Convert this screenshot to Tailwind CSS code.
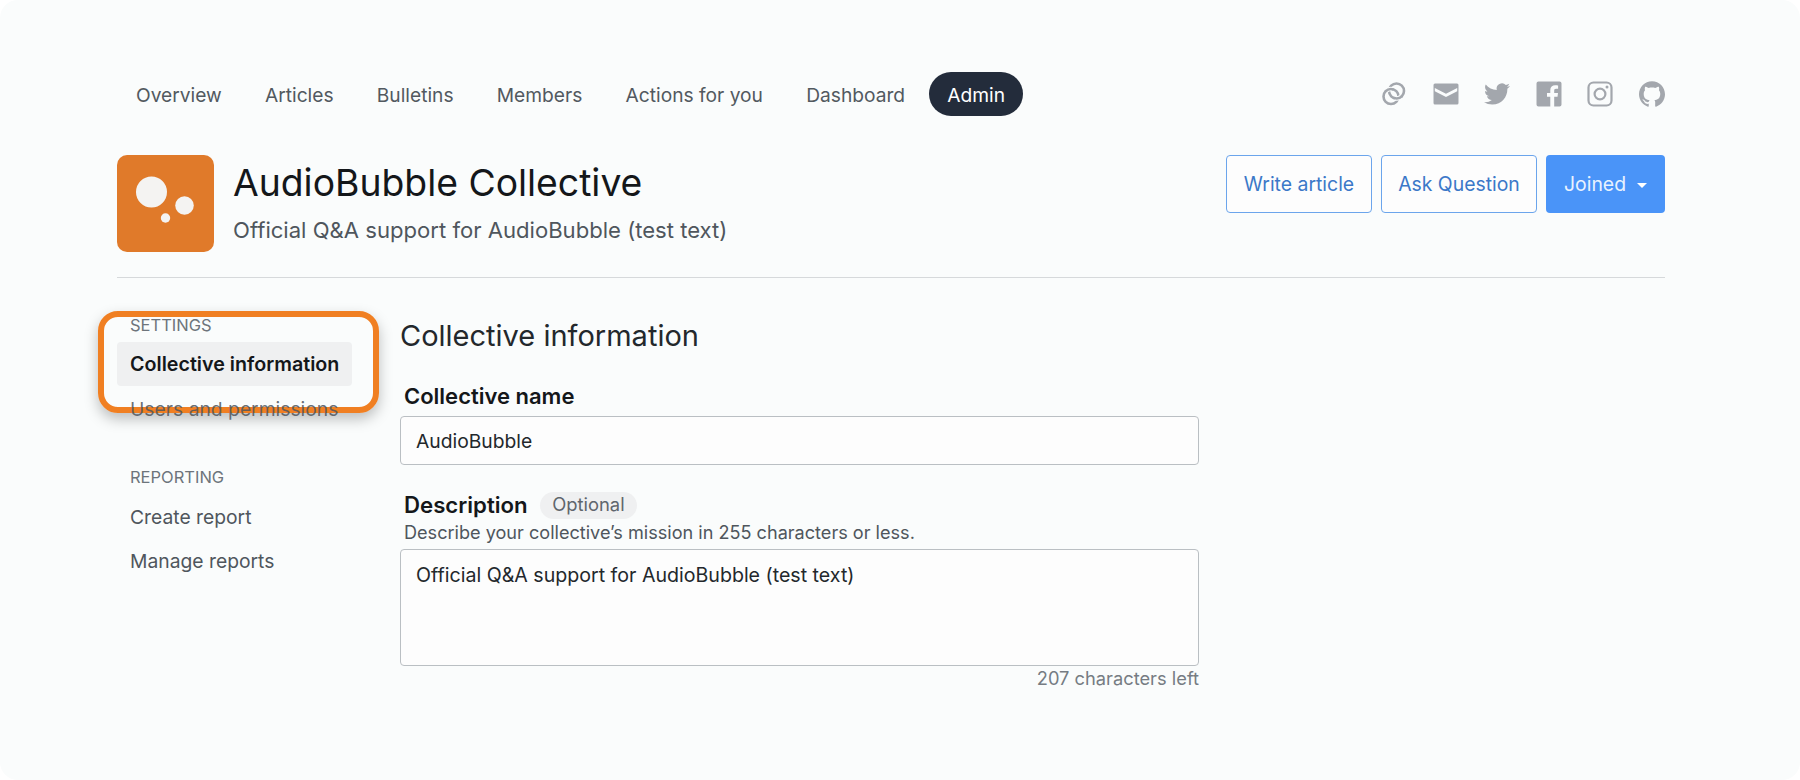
<!DOCTYPE html>
<html lang="en">

<head>
    <meta charset="UTF-8">
    <title>AudioBubble Collective</title>
    <script src="https://cdn.jsdelivr.net/npm/@tailwindcss/browser@4"></script>
</head>

<body class="bg-white font-['Inter',sans-serif]">
    <main class="relative h-[780px] w-[1800px] overflow-hidden rounded-[18px] bg-[#fafcfc] pl-[117px] pr-[135px] pt-[72px]">
        <!-- top nav -->
        <header class="flex h-[44px] items-center justify-between">
            <nav class="flex items-center gap-[5.200px] text-[19.200px] text-[#525960]">
                <a class="pt-[2px] px-[19px]">Overview</a>
                <a class="pt-[2px] px-[19px]">Articles</a>
                <a class="pt-[2px] px-[19px]">Bulletins</a>
                <a class="pt-[2px] px-[19px]">Members</a>
                <a class="pt-[2px] px-[19px]">Actions for you</a>
                <a class="pt-[2px] px-[19px]">Dashboard</a>
                <a class="flex h-[44px] items-center rounded-full bg-[#232c3b] px-[18px] pt-[2px] text-white">Admin</a>
            </nav>
            <div class="flex items-center gap-[25.6px] text-[#a3a7ad]">
                <svg class="h-[26px] w-[26px]" viewBox="0 0 26 26" fill="none" stroke="currentColor" stroke-width="2.6">
                    <circle cx="10" cy="15.500" r="7.500" />
                    <circle cx="15.500" cy="10" r="7.500" />
                    <path d="M5.310 9.650A7.500 7.500 0 0 1 11.470 8.150" stroke="#fafcfc" stroke-width="4.600" />
                    <path d="M4.500 10.400A7.500 7.500 0 0 1 12.500 8.500" />
                    <path d="M20.190 15.850A7.500 7.500 0 0 1 14.030 17.350" stroke="#fafcfc" stroke-width="4.600" />
                    <path d="M21 15.100A7.500 7.500 0 0 1 13 16.900" />
                </svg>
                <svg class="h-[26px] w-[26px]" viewBox="0 0 26 26" fill="currentColor">
                    <path fill-rule="evenodd" d="M2 2.500h22a1.500 1.500 0 0 1 1.500 1.500v18a1.500 1.500 0 0 1-1.500 1.500H2A1.500 1.500 0 0 1 .5 22V4A1.500 1.500 0 0 1 2 2.500Zm-.2 4.600v3.200L13 16l11.200-5.700V7.100L13 12.800Z" />
                </svg>
                <svg class="h-[26px] w-[26px]" viewBox="0 0 24 24" fill="currentColor">
                    <path d="M23.953 4.57a10 10 0 01-2.825.775 4.958 4.958 0 002.163-2.723c-.951.555-2.005.959-3.127 1.184a4.92 4.92 0 00-8.384 4.482C7.69 8.095 4.067 6.13 1.64 3.162a4.822 4.822 0 00-.666 2.475c0 1.71.87 3.213 2.188 4.096a4.904 4.904 0 01-2.228-.616v.06a4.923 4.923 0 003.946 4.827 4.996 4.996 0 01-2.212.085 4.936 4.936 0 004.604 3.417 9.867 9.867 0 01-6.102 2.105c-.39 0-.779-.023-1.17-.067a13.995 13.995 0 007.557 2.209c9.053 0 13.998-7.496 13.998-13.985 0-.21 0-.42-.015-.63A9.935 9.935 0 0024 4.59z" />
                </svg>
                <svg class="h-[26px] w-[26px]" viewBox="0 0 26 26" fill="currentColor">
                    <path d="M2.500 .5h21a2 2 0 0 1 2 2v21a2 2 0 0 1-2 2h-5.300v-9.700h3.300l.5-3.800h-3.800v-2.400c0-1.100.3-1.800 1.900-1.800h2V4.400c-.4 0-1.600-.2-2.900-.2-2.900 0-4.900 1.800-4.900 5v2.800h-3.300v3.800h3.300v9.700H2.500a2 2 0 0 1-2-2v-21a2 2 0 0 1 2-2Z" />
                </svg>
                <svg class="h-[26px] w-[26px]" viewBox="0 0 26 26" fill="none" stroke="currentColor" stroke-width="2.200">
                    <rect x="1.500" y="1.500" width="23" height="23" rx="5" />
                    <circle cx="13" cy="13" r="5.400" />
                    <circle cx="20" cy="6" r="1.500" fill="currentColor" stroke="none" />
                </svg>
                <svg class="h-[26px] w-[26px]" viewBox="0 0 24 24" fill="currentColor">
                    <path d="M12 .297c-6.63 0-12 5.373-12 12 0 5.303 3.438 9.8 8.205 11.385.6.113.82-.258.82-.577 0-.285-.01-1.04-.015-2.04-3.338.724-4.042-1.61-4.042-1.61C4.422 18.07 3.633 17.7 3.633 17.7c-1.087-.744.084-.729.084-.729 1.205.084 1.838 1.236 1.838 1.236 1.07 1.835 2.809 1.305 3.495.998.108-.776.417-1.305.76-1.605-2.665-.3-5.466-1.332-5.466-5.93 0-1.31.465-2.38 1.235-3.22-.135-.303-.54-1.523.105-3.176 0 0 1.005-.322 3.3 1.23.96-.267 1.98-.399 3-.405 1.02.006 2.04.138 3 .405 2.28-1.552 3.285-1.23 3.285-1.23.645 1.653.24 2.873.12 3.176.765.84 1.23 1.91 1.23 3.22 0 4.61-2.805 5.625-5.475 5.92.42.36.81 1.096.81 2.22 0 1.606-.015 2.896-.015 3.286 0 .315.21.69.825.57C20.565 22.092 24 17.592 24 12.297c0-6.627-5.373-12-12-12" />
                </svg>
            </div>
        </header>

        <!-- collective header -->
        <section class="mt-[39px] flex h-[123px] items-start justify-between border-b border-[#d6d9db]">
            <div class="flex items-start gap-[19px]">
                <svg class="h-[97px] w-[97px]" viewBox="0 0 97 97">
                    <rect width="97" height="97" rx="10" fill="#e07a2a" />
                    <circle cx="34.500" cy="37" r="15.500" fill="#f4f3f2" />
                    <circle cx="67.500" cy="50.500" r="9.300" fill="#f4f3f2" />
                    <circle cx="48.500" cy="63" r="4.700" fill="#f4f3f2" />
                </svg>
                <div class="pt-[6px]">
                    <h1 class="text-[37.300px] leading-[44px] text-[#14171a]">AudioBubble Collective</h1>
                    <p class="mt-[10px] text-[22.100px] leading-[30px] text-[#4f565d]">Official Q&amp;A support for AudioBubble (test text)</p>
                </div>
            </div>
            <div class="flex items-center gap-[9px] text-[19.400px]">
                <button class="h-[58px] w-[146px] rounded-[4px] border-[1.500px] border-[#6ba5ec] bg-[#fdfdfd] pt-[2px] text-[#3b78c8]">Write article</button>
                <button class="h-[58px] w-[156px] rounded-[4px] border-[1.500px] border-[#6ba5ec] bg-[#fdfdfd] pt-[2px] text-[#3b78c8]">Ask Question</button>
                <button class="flex h-[58px] w-[119px] items-center justify-center gap-[11px] rounded-[4px] bg-[#4a94f8] pt-[2px] text-[#e9f2fe]">
                    Joined
                    <span class="h-0 w-0 border-x-[5px] border-t-[5px] border-x-transparent border-t-white"></span>
                </button>
            </div>
        </section>

        <section class="flex">
            <!-- sidebar -->
            <aside class="w-[283px] shrink-0 pt-[37px]">
                <h2 class="pl-[13px] text-[16.500px] leading-[20px] text-[#6d747b]">SETTINGS</h2>
                <ul class="mt-[7px] w-[235px] text-[19.300px] text-[#4f565d]">
                    <li class="flex h-[44px] items-center rounded-[4px] bg-[#eff0f1] pl-[13px] pt-[2px] text-[19.700px] font-semibold text-[#14171a]">Collective information</li>
                    <li class="relative z-10 flex h-[44px] items-center pl-[13px] pt-[2px] text-[#4f565d]/85">Users and permissions</li>
                </ul>
                <h2 class="mt-[37px] pl-[13px] text-[16.500px] leading-[20px] text-[#6d747b]">REPORTING</h2>
                <ul class="mt-[8px] w-[235px] text-[19.300px] text-[#4f565d]">
                    <li class="flex h-[44px] items-center pl-[13px]">Create report</li>
                    <li class="flex h-[44px] items-center pl-[13px]">Manage reports</li>
                </ul>
            </aside>

            <!-- form -->
            <div class="w-[799px] pt-[37px]">
                <h2 class="text-[29px] leading-[42px] text-[#23282c]">Collective information</h2>
                <label class="mt-[25px] block pl-[4px] text-[22px] leading-[28px] font-semibold text-[#14171a]">Collective name</label>
                <input class="mt-[6px] block h-[49px] w-full rounded-[4px] border border-[#babfc3] bg-[#fdfdfd] px-[15px] text-[19.300px] text-[#23282c]" value="AudioBubble">
                <div class="mt-[26px] flex items-center gap-[12px] pl-[4px]">
                    <label class="text-[22.200px] leading-[28px] font-semibold text-[#14171a]">Description</label>
                    <span class="flex h-[27px] items-center rounded-full bg-[#eff0f1] px-[12.500px] text-[18.400px] text-[#5f666d]">Optional</span>
                </div>
                <p class="pl-[4px] text-[18.100px] leading-[27px] text-[#4f565d]">Describe your collective’s mission in 255 characters or less.</p>
                <textarea class="mt-[3px] block h-[117px] w-full resize-none rounded-[4px] border border-[#babfc3] bg-[#fdfdfd] px-[15px] pb-[11px] pt-[13px] text-[19.600px] leading-[24px] text-[#23282c]">Official Q&amp;A support for AudioBubble (test text)</textarea>
                <p class="mt-[1px] text-right text-[18.300px] leading-[22px] text-[#767c83]">207 characters left</p>
            </div>
        </section>

        <!-- highlight callout -->
        <div class="absolute left-[98px] top-[311px] h-[102px] w-[281px] rounded-[20px] border-[6px] border-[#f07f22] shadow-[0_6px_14px_rgba(0,0,0,0.25)]"></div>
    </main>
</body>

</html>
